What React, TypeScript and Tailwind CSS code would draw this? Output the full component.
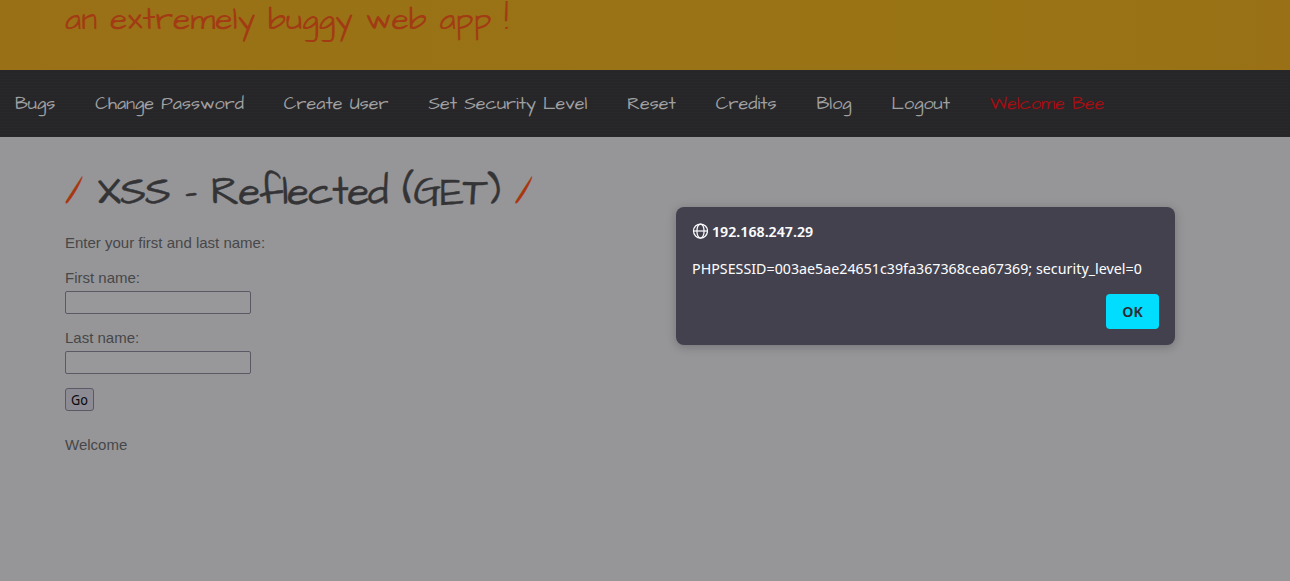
const navItems: string[] = [
  "Bugs",
  "Change Password",
  "Create User",
  "Set Security Level",
  "Reset",
  "Credits",
  "Blog",
  "Logout",
];

function Globe() {
  return (
    <svg viewBox="0 0 16 16" className="h-4 w-4 shrink-0" fill="none" stroke="#fbfbfe" strokeWidth="1.25">
      <circle cx="8.5" cy="8" r="7" />
      <ellipse cx="8.5" cy="8" rx="3.6" ry="7" />
      <path d="M1.5 8h14" />
    </svg>
  );
}

function Field({ id, label }: { id: string; label: string }) {
  return (
    <div className="flex h-[60px] flex-col">
      <label htmlFor={id} className="h-[23px] leading-[20px]">{label}</label>
      <input id={id} className="h-[23px] w-[186px] rounded-[2px] border border-[#5b5966] bg-[#98989a] px-1 outline-none" />
    </div>
  );
}

export default function App() {
  return (
    <div className="relative flex h-[581px] w-[1290px] flex-col overflow-hidden bg-[#969698] font-['Liberation_Sans',sans-serif] text-[15px] text-[#474749]">
      <header className="h-[70px] shrink-0 bg-[linear-gradient(90deg,#9a7017_0%,#997216_20%,#997315_50%,#997415_75%,#997216_92%,#997015_100%)] pl-[65px]">
        <h2 className="whitespace-nowrap font-['Architects_Daughter',cursive] text-[32px] leading-[40px] font-normal text-[#a23b13]">
          an extremely buggy web app !
        </h2>
      </header>
      <nav className="flex h-[67px] shrink-0 items-center gap-10 bg-[#262628] bg-[repeating-linear-gradient(0deg,rgba(255,255,255,0.01)_0_1px,transparent_1px_3px)] pb-px pl-[15px] font-['Architects_Daughter',cursive] text-[18px] text-[#a0a0a2]">
        {navItems.map((label) => (
          <a key={label} className="shrink-0 whitespace-nowrap">{label}</a>
        ))}
        <span className="shrink-0 whitespace-nowrap text-[#a50d12]">Welcome Bee</span>
      </nav>
      <main className="flex flex-col pt-[31px] pl-[65px]">
        <h1 className="h-[50px] whitespace-nowrap font-['Architects_Daughter',cursive] text-[40px] leading-[50px] font-normal tracking-[-1px] text-[#343436]">
          <span className="text-[#a8370f] [-webkit-text-stroke:0.3px_#a8370f]">/</span>
          <span className="[-webkit-text-stroke:0.4px_#343436]"> XSS - Reflected (GET) </span>
          <span className="text-[#a8370f] [-webkit-text-stroke:0.3px_#a8370f]">/</span>
        </h1>
        <p className="mt-[15px] mb-[15px] leading-[20px]">Enter your first and last name:</p>
        <Field id="first" label="First name:" />
        <Field id="last" label="Last name:" />
        <button className="h-[23px] w-[29px] rounded-[3px] border border-[#5b5966] bg-[#8d8c94] pt-px font-['Noto_Sans_Display','Noto_Sans',sans-serif] text-[13.5px] leading-[20px] text-[#0c0c10]">Go</button>
        <p className="mt-[24px] leading-[20px]">Welcome</p>
      </main>
      <section role="dialog" className="absolute top-[207px] left-[676px] flex h-[138px] w-[499px] flex-col rounded-[8px] bg-[#42414d] px-4 pt-[15px] pb-4 font-['Noto_Sans_Display','Noto_Sans',sans-serif] text-[15px] text-[#fbfbfe] shadow-[0_2px_10px_rgba(20,20,30,0.25)]">
        <div className="flex h-[18px] items-center gap-1 font-semibold">
          <Globe />
          <span className="leading-[18px]">192.168.247.29</span>
        </div>
        <p className="mt-[18px] h-5 whitespace-nowrap text-[15.1px] leading-5 tracking-[0.02px]">PHPSESSID=003ae5ae24651c39fa367368cea67369; security_level=0</p>
        <button className="mt-[16px] h-[35px] w-[53px] self-end rounded-[4px] bg-[#00ddff] font-semibold text-[#2b2a33]">OK</button>
      </section>
    </div>
  );
}
